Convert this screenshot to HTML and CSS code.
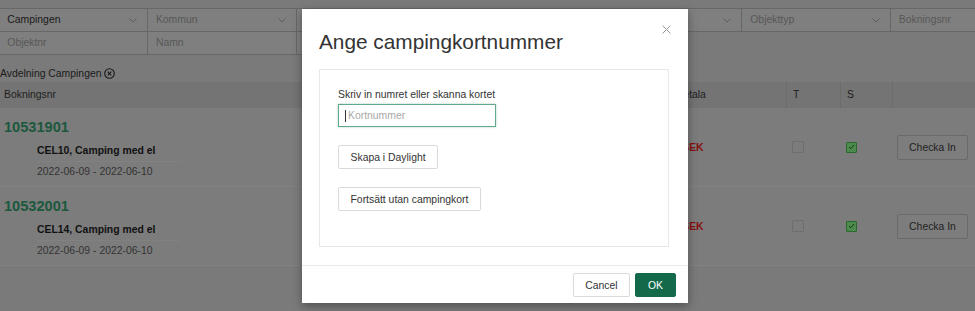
FILE: index.html
```html
<!DOCTYPE html>
<html lang="sv">
<head>
<meta charset="utf-8">
<title>Bokningar</title>
<link rel="stylesheet" href="styles.css">
</head>
<body>
<div class="bg-page">
  <div class="filters">
    <div class="frows">
      <div class="frow">
        <div class="f val">Campingen<svg class="chev" width="8" height="5" viewBox="0 0 8 5"><path d="M0.5 0.5L4 4L7.5 0.5" fill="none" stroke="#5c5c5c" stroke-width="1"/></svg></div>
        <div class="f">Kommun<svg class="chev" width="8" height="5" viewBox="0 0 8 5"><path d="M0.5 0.5L4 4L7.5 0.5" fill="none" stroke="#5c5c5c" stroke-width="1"/></svg></div>
        <div class="f"><span></span><svg class="chev" width="8" height="5" viewBox="0 0 8 5"><path d="M0.5 0.5L4 4L7.5 0.5" fill="none" stroke="#5c5c5c" stroke-width="1"/></svg></div>
        <div class="f"></div>
        <div class="f"><span></span><svg class="chev" width="8" height="5" viewBox="0 0 8 5"><path d="M0.5 0.5L4 4L7.5 0.5" fill="none" stroke="#5c5c5c" stroke-width="1"/></svg></div>
        <div class="f">Objekttyp<svg class="chev" width="8" height="5" viewBox="0 0 8 5"><path d="M0.5 0.5L4 4L7.5 0.5" fill="none" stroke="#5c5c5c" stroke-width="1"/></svg></div>
        <div class="f">Bokningsnr</div>
      </div>
      <div class="frow frow2">
        <div class="f">Objektnr</div>
        <div class="f">Namn</div>
        <div class="f"></div>
      </div>
    </div>
  </div>

  <div class="tag">Avdelning Campingen <svg class="xcirc" width="11" height="11" viewBox="0 0 11 11"><circle cx="5.5" cy="5.5" r="4.8" fill="none" stroke="#1a1a1a" stroke-width="1.1"/><path d="M3.7 3.7L7.3 7.3M7.3 3.7L3.7 7.3" stroke="#1a1a1a" stroke-width="1.1"/></svg></div>

  <div class="tbl">
    <div class="thead">
      <div class="c c-main">Bokningsnr</div>
      <div class="c c-pay">Att betala</div>
      <div class="c c-t">T</div>
      <div class="c c-s">S</div>
      <div class="c c-act"></div>
    </div>

    <div class="trow">
      <div class="c c-main">
        <div class="bnr">10531901</div>
        <div class="details">
          <div class="d-obj">CEL10, Camping med el</div>
          <div class="d-date">2022-06-09 - 2022-06-10</div>
        </div>
      </div>
      <div class="c c-pay"><span class="sek">280 SEK</span></div>
      <div class="c c-t"><span class="cb"></span></div>
      <div class="c c-s"><span class="cb on"><svg width="7" height="6" viewBox="0 0 7 6"><path d="M1 3L2.8 4.8L6 1" fill="none" stroke="#163a16" stroke-width="1"/></svg></span></div>
      <div class="c c-act"><span class="btn-in">Checka In</span></div>
    </div>

    <div class="trow">
      <div class="c c-main">
        <div class="bnr">10532001</div>
        <div class="details">
          <div class="d-obj">CEL14, Camping med el</div>
          <div class="d-date">2022-06-09 - 2022-06-10</div>
        </div>
      </div>
      <div class="c c-pay"><span class="sek">280 SEK</span></div>
      <div class="c c-t"><span class="cb"></span></div>
      <div class="c c-s"><span class="cb on"><svg width="7" height="6" viewBox="0 0 7 6"><path d="M1 3L2.8 4.8L6 1" fill="none" stroke="#163a16" stroke-width="1"/></svg></span></div>
      <div class="c c-act"><span class="btn-in">Checka In</span></div>
    </div>
  </div>
</div>

<div class="card">
  <div class="m-head">
    <h2 class="m-title">Ange campingkortnummer</h2>
    <span class="m-close"><svg width="9" height="9" viewBox="0 0 9 9"><path d="M0.5 0.5L8.5 8.5M8.5 0.5L0.5 8.5" stroke="#9a9a9a" stroke-width="1"/></svg></span>
  </div>
  <div class="m-body">
    <div class="panel">
      <div class="lbl">Skriv in numret eller skanna kortet</div>
      <div class="inp"><span class="caret"></span><span class="ph">Kortnummer</span></div>
      <div class="pbtn-row"><span class="btn">Skapa i Daylight</span></div>
      <div class="pbtn-row"><span class="btn">Fortsätt utan campingkort</span></div>
    </div>
  </div>
  <div class="m-foot">
    <span class="btn">Cancel</span>
    <span class="btn ok">OK</span>
  </div>
</div>
</body>
</html>
```

FILE: styles.css
```css
* { box-sizing: border-box; }

html {
  margin: 0;
  padding: 0;
  background: #7a7a7a;
}

/* page colours are the dimmed tones seen behind the dialog */
body {
  margin: 0;
  padding: 0;
  position: relative;
  font-family: "Liberation Sans", Arial, sans-serif;
  font-size: 10.4px;
  color: #1a1a1a;
  background: #7a7a7a;
}

.bg-page {
  width: 975px;
  height: 311px;
  overflow: hidden;
  background: #7a7a7a;
}

/* filters */
.filters {
  padding-top: 8px;
  overflow: hidden;
}

.frows {
  margin-left: -1.5px;
}

.frow {
  display: flex;
}

.frow2 {
  margin-top: -1px;
}

.f {
  flex: 0 0 149.6px;
  height: 24px;
  margin-right: -1px;
  border: 1px solid #676767;
  background: #7f7f7f;
  padding: 0 10px 0 7.8px;
  line-height: 22px;
  color: #575757;
  display: flex;
  align-items: center;
  justify-content: space-between;
}

.f.val {
  color: #1a1a1a;
}

.chev {
  display: block;
  margin-top: 1px;
}

/* tag */
.tag {
  margin: 12px 0 1px 0;
  line-height: 14px;
  height: 14px;
  color: #1a1a1a;
  display: flex;
  align-items: center;
}

.xcirc {
  margin-left: 3px;
  margin-top: -1px;
}

/* table */
.thead,
.trow {
  display: flex;
}

.thead {
  height: 26px;
  background: #747474;
  line-height: 26px;
}

.thead .c { color: #1e1e1e; }

.thead .c-t,
.thead .c-s,
.thead .c-act {
  border-left: 1px solid #6c6c6c;
}

.c-main { flex: 1 1 auto; padding-left: 4px; }
.c-pay  { flex: 0 0 130px; padding-left: 6px; }
.c-t    { flex: 0 0 54px; padding-left: 6px; }
.c-s    { flex: 0 0 52px; padding-left: 6px; }
.c-act  { flex: 0 0 83px; padding-left: 5px; }

.trow {
  height: 79px;
  background: #7c7c7c;
  border-bottom: 1px solid #818181;
  align-items: center;
}

.trow .c-main {
  align-self: stretch;
  padding-top: 9px;
}

.bnr {
  font-size: 14.6px;
  font-weight: bold;
  line-height: 20px;
  color: #1b583d;
}

.details {
  margin: 3px 0 0 33px;
  width: 143px;
}

.d-obj {
  height: 22px;
  line-height: 21px;
  font-weight: bold;
  color: #111;
  border-bottom: 1px solid #818181;
}

.d-date {
  line-height: 20px;
  color: #333;
}

.sek {
  font-weight: bold;
  color: #861111;
}

.cb {
  display: block;
  width: 12px;
  height: 12px;
  border: 1px solid #6e6e6e;
  background: #7c7c7c;
  border-radius: 1px;
}

.cb.on {
  width: 11px;
  height: 11px;
  border-color: #2b682b;
  background: #4d8a4d;
  display: flex;
  align-items: center;
  justify-content: center;
}

.cb.on svg { display: block; }

.btn-in {
  display: flex;
  align-items: center;
  justify-content: center;
  width: 71px;
  height: 25px;
  border: 1px solid #6a6a6a;
  background: #7d7d7d;
  border-radius: 2px;
  color: #222;
}

/* dialog card lying over the page */
.card {
  position: absolute;
  left: 302px;
  top: 9px;
  width: 386px;
  background: #fff;
  box-shadow: 0 3px 9px rgba(0, 0, 0, 0.35);
}

.m-head {
  display: flex;
  justify-content: space-between;
  align-items: flex-start;
  padding: 21px 17px 0 17px;
}

.m-title {
  margin: 0;
  font-size: 20.8px;
  font-weight: normal;
  line-height: 24px;
  color: #333;
}

.m-close {
  display: block;
  margin-top: -5px;
}

.m-close svg { display: block; }

.m-body {
  padding: 15px 19px 18px 17px;
}

.panel {
  border: 1px solid #e8e8e8;
  padding: 18px 18px 35px 18px;
}

.lbl {
  line-height: 14px;
  color: #333;
  margin-bottom: 2px;
}

.inp {
  width: 158px;
  height: 23px;
  border: 1px solid #62a88a;
  box-shadow: 0 0 2px rgba(98, 168, 138, 0.55);
  display: flex;
  align-items: center;
  padding-left: 6px;
}

.caret {
  width: 1px;
  height: 12px;
  background: #333;
  margin-right: 2px;
}

.ph {
  color: #a8a8a8;
}

.pbtn-row {
  margin-top: 18px;
  display: flex;
}

.btn {
  display: inline-flex;
  align-items: center;
  height: 24px;
  padding: 0 11.5px;
  border: 1px solid #dadada;
  border-radius: 2px;
  background: #fff;
  color: #333;
}

.m-foot {
  border-top: 1px solid #e9e9e9;
  padding: 7px 12px 6px 0;
  display: flex;
  justify-content: flex-end;
  gap: 5px;
}

.btn.ok {
  background: #136a4b;
  border-color: #136a4b;
  color: #fff;
  padding: 0 12px;
}
```
